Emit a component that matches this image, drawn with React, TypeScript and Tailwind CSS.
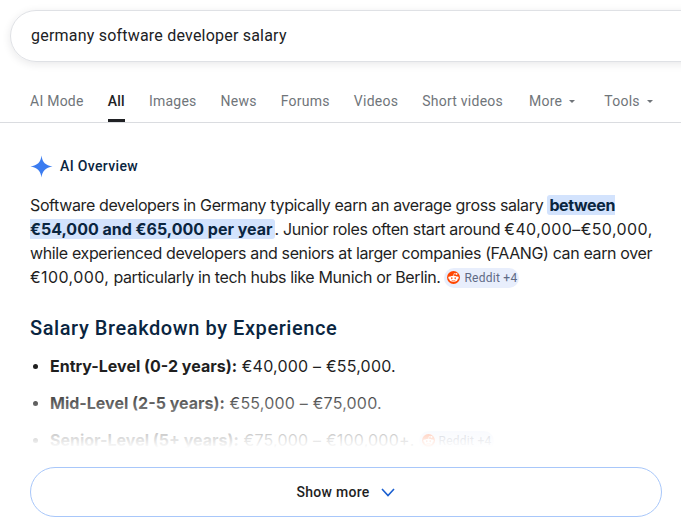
const tabs = ["AI Mode", "All", "Images", "News", "Forums", "Videos", "Short videos"]

function Caret() {
  return <span className="ml-[7px] mt-[1px] h-0 w-0 border-x-[3px] border-t-[3px] border-x-transparent border-t-[#70757a]" />
}

function RedditIcon() {
  return (
    <svg width="13" height="13" viewBox="0 0 20 20" className="shrink-0">
      <circle cx="10" cy="10" r="10" fill="#ff4500" />
      <ellipse cx="10" cy="12" rx="6.6" ry="4.6" fill="#fff" />
      <circle cx="3.8" cy="10.2" r="1.8" fill="#fff" />
      <circle cx="16.2" cy="10.2" r="1.8" fill="#fff" />
      <circle cx="7.4" cy="11" r="1.2" fill="#ff4500" />
      <circle cx="12.6" cy="11" r="1.2" fill="#ff4500" />
      <path d="M7 14c1.8 1.2 4.200 1.200 6 0" fill="none" stroke="#ff4500" strokeWidth="1" />
      <path d="M10 7.500 11 3.800l3 .7" fill="none" stroke="#fff" strokeWidth="1" />
      <circle cx="14.800" cy="4.500" r="1.300" fill="#fff" />
    </svg>
  )
}

function Chip() {
  return (
    <span className="ml-[4px] inline-flex h-[20px] w-[75px] items-center gap-[4px] rounded-full bg-[#e8eefc] pl-[3px] align-[-1px] font-['Roboto',sans-serif] text-[12px] leading-none tracking-[0.25px] text-[#5f6a85]">
      <RedditIcon />
      Reddit +4
    </span>
  )
}

export default function App() {
  return (
    <div className="h-[527px] w-[681px] overflow-hidden bg-white font-['Roboto',sans-serif]">
      <div className="pl-[10px] pt-[10px]">
        <div className="flex h-[52px] w-[720px] items-center rounded-l-[26px] border border-[#dfe1e5] pl-[20px] text-[16px] tracking-[0.21px] text-[#202124] shadow-[0_2px_8px_rgba(32,33,36,0.1)]">
          germany software developer salary
        </div>
      </div>

      <nav className="mt-[12px] flex h-[49px] items-center border-b border-[#dadce0] pl-[30px] pt-[6px] text-[14px] tracking-[0.25px] text-[#70757a]">
        {tabs.map((tab) => (
          <span
            key={tab}
            className={
              tab === "All"
                ? "relative mr-[24px] flex h-full items-center font-medium text-[#202124] after:absolute after:bottom-0 after:left-0 after:h-[3px] after:w-full after:bg-[#202124]"
                : "mr-[24px] flex h-full items-center"
            }
          >
            {tab}
          </span>
        ))}
        <span className="ml-[2px] flex items-center">More<Caret /></span>
        <span className="ml-[29px] flex items-center">Tools<Caret /></span>
      </nav>

      <main className="relative pl-[30px] pr-[20px] pt-[28px]">
        <div className="flex h-[30px] items-center gap-[7px] pt-[1px]">
          <svg width="23" height="23" viewBox="0 0 24 24" className="shrink-0">
            <path d="M12 0.500C12.800 7.400 16.300 11 23.500 12 16.300 13 12.800 16.600 12 23.500 11.200 16.600 7.700 13 0.500 12 7.700 11 11.200 7.400 12 0.500Z" fill="#3b7cf0" />
          </svg>
          <span className="text-[14px] font-medium tracking-[0.35px] text-[#0a2540]">AI Overview</span>
        </div>

        <p className="mt-[12px] font-['Inter',sans-serif] text-[16px] leading-[24px] tracking-[-0.37px] text-[#1f1f1f]">
          Software developers in Germany typically earn an average gross salary{" "}
          <mark className="rounded-[3px] bg-[#d3e3fd] px-[2px] font-bold text-[#0a2540]">
            between <span className="tracking-[0px]">€54,000 and €65,000 per year</span>
          </mark>
          . Junior roles often start around <span className="whitespace-nowrap tracking-[0.4px]">€40,000–€50,000,</span> while experienced developers and seniors at larger companies (FAANG) can earn over <span className="tracking-[0.4px]">€100,000,</span> particularly in tech hubs like Munich or Berlin.
          <Chip />
        </p>

        <h2 className="mt-[25px] text-[20px] leading-[28px] font-medium tracking-[0.58px] text-[#0a2540]">
          Salary Breakdown by Experience
        </h2>

        <ul className="mt-[12px] flex flex-col gap-[13px] pl-[20px] font-['Inter',sans-serif] text-[16px] leading-[24px] tracking-[0.2px] text-[#1f1f1f]">
          <li className="relative before:absolute before:left-[-17px] before:top-[10px] before:h-[5px] before:w-[5px] before:rounded-full before:bg-[#1f1f1f]">
            <b className="tracking-[0px]">Entry-Level (0-2 years):</b> €40,000 – €55,000.
          </li>
          <li className="relative before:absolute before:left-[-17px] before:top-[10px] before:h-[5px] before:w-[5px] before:rounded-full before:bg-[#1f1f1f]">
            <b className="tracking-[0px]">Mid-Level (2-5 years):</b> €55,000 – €75,000.
          </li>
          <li className="relative before:absolute before:left-[-17px] before:top-[10px] before:h-[5px] before:w-[5px] before:rounded-full before:bg-[#1f1f1f]">
            <b className="tracking-[0px]">Senior-Level (5+ years):</b> €75,000 – €100,000+.
            <Chip />
          </li>
        </ul>

        <div className="absolute inset-x-0 top-[262px] h-[70px] bg-gradient-to-b from-white/0 to-white to-90%" />
        <button className="absolute left-[30px] top-[344px] flex h-[50px] w-[632px] items-center justify-center gap-[10px] rounded-full border border-[#a8c7fa] bg-white text-[14px] font-medium tracking-[0.3px] text-[#1f1f1f]">
          Show more
          <svg width="16" height="16" viewBox="0 0 16 16" fill="none" stroke="#1a5fd0" strokeWidth="1.600">
            <path d="M2 5l6 6.500L14 5" />
          </svg>
        </button>
      </main>
    </div>
  )
}
